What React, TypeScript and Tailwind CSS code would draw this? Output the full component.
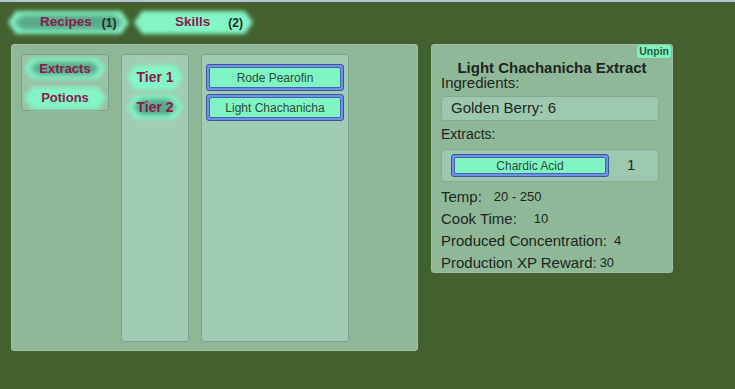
import type { ReactNode } from 'react'

const hex = '[clip-path:polygon(8px_0,calc(100%-8px)_0,100%_50%,calc(100%-8px)_100%,8px_100%,0_50%)]'

function GlowTab({ children, active, className }: { children: ReactNode; active?: boolean; className?: string }) {
  return (
    <div className={`relative flex items-center ${className ?? ''}`}>
      <div className="absolute -inset-[1px] blur-[2px]">
        <div className={`h-full w-full bg-[#84f5c6] ${hex}`} />
      </div>
      {active && (
        <div className="absolute inset-x-[5px] inset-y-[3px] blur-[2.5px]">
          <div className={`h-full w-full bg-[#58aa8a] ${hex}`} />
        </div>
      )}
      <div className="relative flex w-full items-center">{children}</div>
    </div>
  )
}

function BlueButton({ children, className }: { children: ReactNode; className?: string }) {
  return (
    <div className={`rounded-[3px] border border-[#3a5696] bg-[#6f90e6] p-[2px] ${className ?? ''}`}>
      <div className="flex h-full items-center justify-center rounded-[2px] border border-[#4665ad] bg-[#7ff5c4] text-[12px] text-[#2e4a3a]">
        {children}
      </div>
    </div>
  )
}

export default function App() {
  return (
    <div className="relative h-[389px] w-[735px] overflow-hidden bg-[#42612f] font-['Liberation_Sans',Arial,sans-serif]">
      {/* top strip */}
      <div className="h-[2px] bg-[#b7c3d6]" />

      {/* tabs */}
      <div className="ml-[9px] mt-[10px] flex gap-[7px]">
        <GlowTab active className="h-[21px] w-[119px]">
          <span className="ml-[31px] text-[13.5px] font-bold text-[#8a1a4c]">Recipes</span>
          <span className="ml-[10px] text-[12px] font-bold text-[#1d2a22]">(1)</span>
        </GlowTab>
        <GlowTab className="h-[21px] w-[117px]">
          <span className="ml-[40px] text-[13.5px] font-bold text-[#8a1a4c]">Skills</span>
          <span className="ml-[18px] text-[12px] font-bold text-[#1d2a22]">(2)</span>
        </GlowTab>
      </div>

      <div className="mt-[11px] flex items-start">
        {/* left panel */}
        <div className="ml-[11px] flex h-[307px] w-[407px] items-start gap-[12px] rounded-[3px] border border-[#9cc2a6] bg-[#8fb898] p-[9px]">
          <div className="flex h-[57px] w-[88px] flex-col gap-[10px] rounded-[3px] border border-[#7b9f86] bg-[#99c2a7] px-[3px] pt-[4px]">
            <GlowTab active className="h-[19px] w-full">
              <span className="w-full text-center text-[13px] font-bold text-[#8a1a4c]">Extracts</span>
            </GlowTab>
            <GlowTab className="h-[20px] w-full">
              <span className="w-full text-center text-[13px] font-bold text-[#8a1a4c]">Potions</span>
            </GlowTab>
          </div>

          <div className="flex h-[288px] w-[68px] flex-col items-center gap-[7px] rounded-[3px] border border-[#7ea48b] bg-[#a0cbb5] pt-[11px]">
            <GlowTab className="h-[23px] w-[54px]">
              <span className="w-full text-center text-[14px] font-bold text-[#8a1a4c]">Tier 1</span>
            </GlowTab>
            <GlowTab active className="h-[22px] w-[54px]">
              <span className="w-full text-center text-[14px] font-bold text-[#8a1a4c]">Tier 2</span>
            </GlowTab>
          </div>

          <div className="flex h-[288px] w-[148px] flex-col gap-[3px] rounded-[3px] border border-[#7ea48b] bg-[#a0cbb5] px-[4px] pt-[9px]">
            <BlueButton className="h-[27px]">Rode Pearofin</BlueButton>
            <BlueButton className="h-[27px]">Light Chachanicha</BlueButton>
          </div>
        </div>

        {/* right panel */}
        <div className="relative ml-[13px] h-[229px] w-[242px] rounded-[3px] border border-[#9cc2a6] bg-[#8fb898] px-[9px] text-[#1c261f]">
          <div className="absolute right-[1px] top-0 rounded-[3px] bg-[#80f2c2] px-[2px] text-[10.5px] leading-[13px] font-bold text-[#2c5c42]">
            Unpin
          </div>
          <div className="mt-[16px] text-center text-[15px] leading-[14px] font-bold">Light Chachanicha Extract</div>
          <div className="text-[15px] leading-[16px]">Ingredients:</div>
          <div className="mt-[5px] flex h-[25px] w-[218px] items-center rounded-[3px] border border-[#84ab90] bg-[#9cc8b0] px-[9px] text-[15px]">
            Golden Berry: 6
          </div>
          <div className="mt-[5px] text-[14px] leading-[16px]">Extracts:</div>
          <div className="mt-[7px] flex h-[33px] w-[218px] items-center rounded-[3px] border border-[#84ab90] bg-[#9cc8b0] pl-[9px]">
            <BlueButton className="h-[23px] w-[158px]">Chardic Acid</BlueButton>
            <span className="ml-[18px] text-[15px]">1</span>
          </div>
          <div className="mt-[4px] flex flex-col text-[15px]">
            <div className="flex h-[22px] items-center">
              <span>Temp:</span>
              <span className="ml-[12px] text-[13px]">20 - 250</span>
            </div>
            <div className="flex h-[22px] items-center">
              <span>Cook Time:</span>
              <span className="ml-[17px] text-[13px]">10</span>
            </div>
            <div className="flex h-[22px] items-center">
              <span>Produced Concentration:</span>
              <span className="ml-[7px] text-[13px]">4</span>
            </div>
            <div className="flex h-[22px] items-center">
              <span>Production XP Reward:</span>
              <span className="ml-[3px] text-[13px]">30</span>
            </div>
          </div>
        </div>
      </div>
    </div>
  )
}
